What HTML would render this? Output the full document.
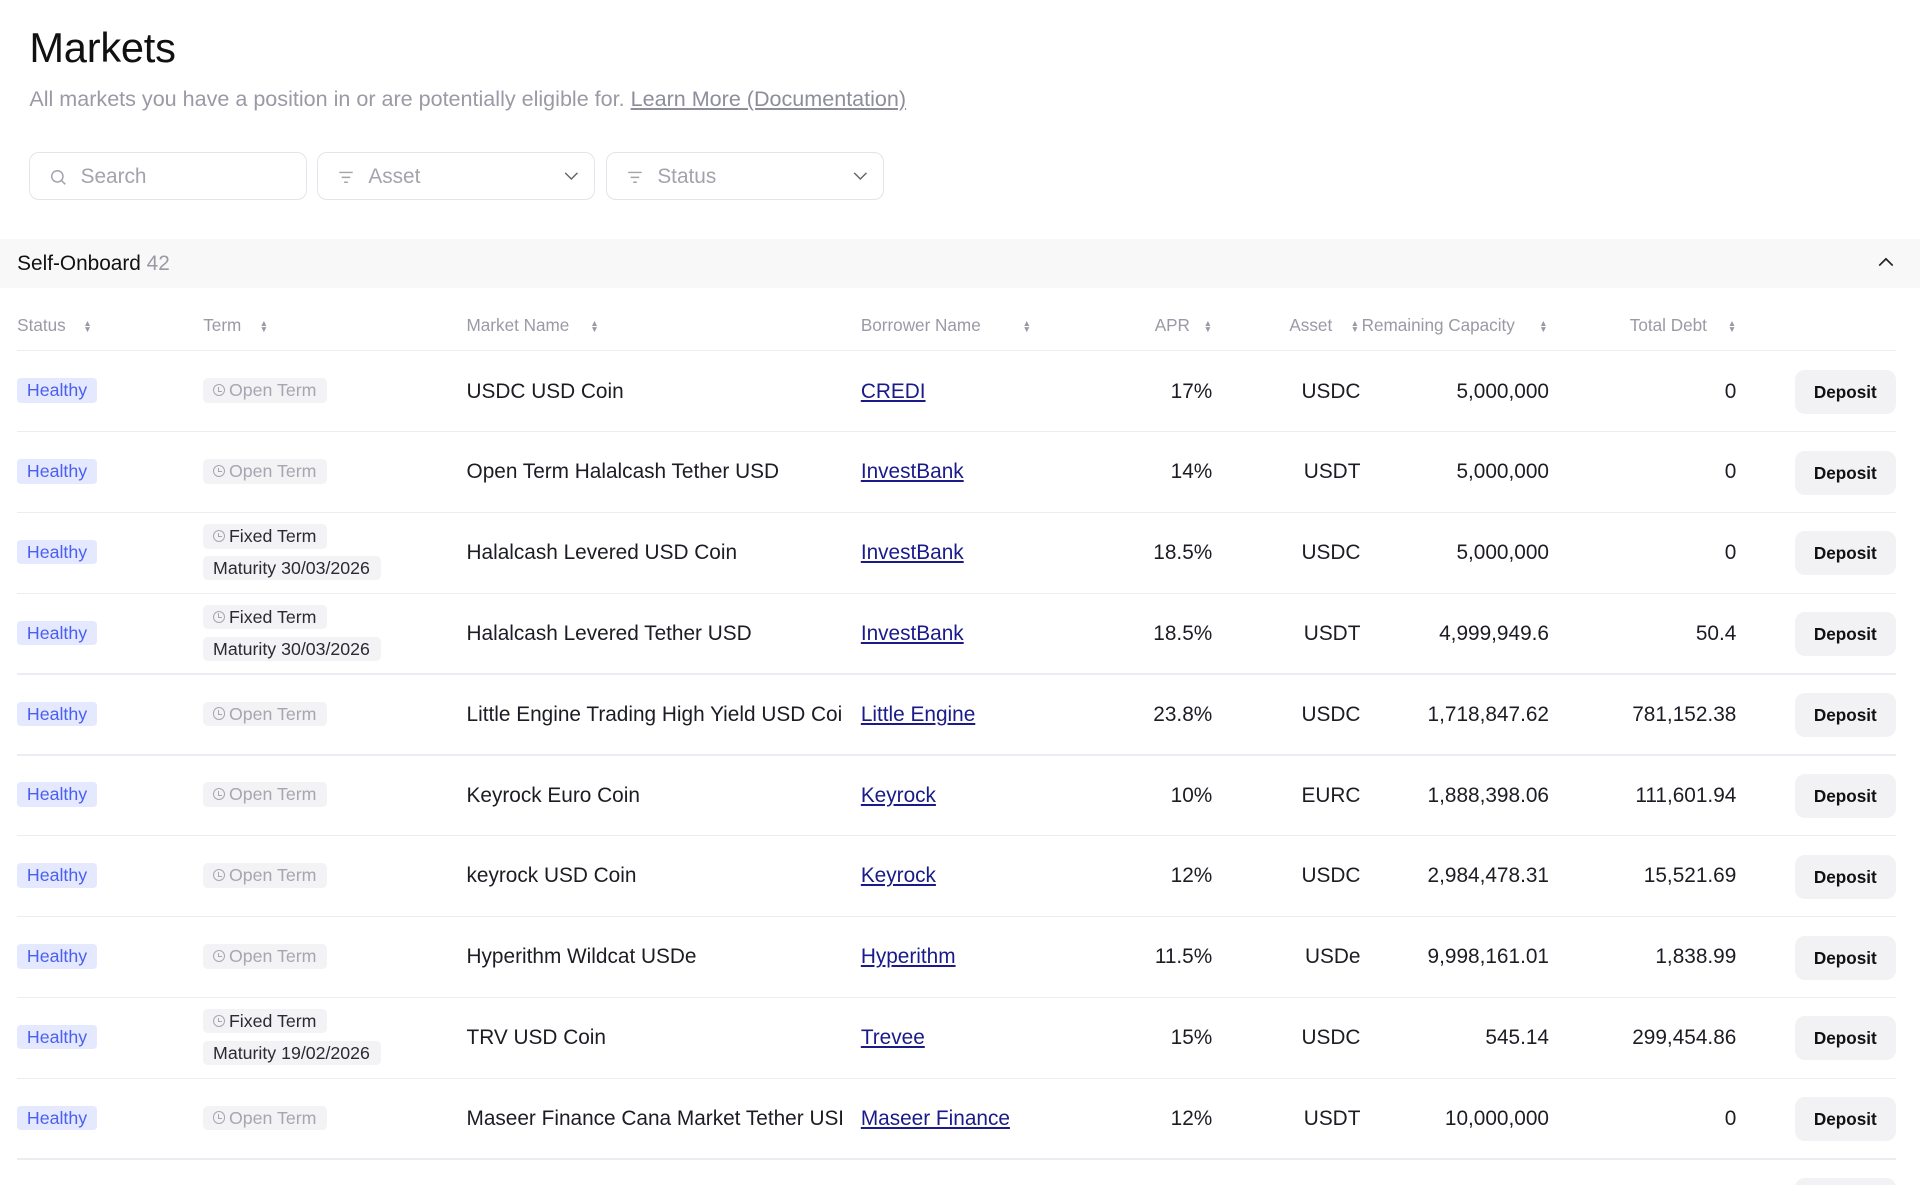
<!DOCTYPE html>
<html><head><meta charset="utf-8"><style>
html,body{margin:0;padding:0;background:#fff;overflow:hidden;width:1920px;height:1185px}
#w{zoom:1.22449;width:1568px;height:968px;position:relative;font-family:"Liberation Sans",sans-serif;color:#1c1c24}
.a{position:absolute;white-space:nowrap}
h1{position:absolute;left:24px;top:20px;margin:0;font-size:34px;font-weight:400;letter-spacing:-0.2px;color:#111}
.sub{left:24px;top:70px;font-size:17.6px;color:#9a9aa6}
.sub u{color:#8d8d9c}
.inp{top:124px;height:38px;width:225px;border:1px solid #e3e3ea;border-radius:8px}
.inp span{position:absolute;left:41px;top:10px;font-size:17px;color:#a3a3ad}
.band{left:0;top:195px;width:1568px;height:40px;background:#f8f8f8}
.hd{font-size:14px;color:#9a9aa6;top:257px}
.sort{font-size:7px;color:#9a9aa6;top:261px;line-height:5px}
.line{left:14px;width:1534px;height:1px;background:#ececf2}
.row{position:absolute;left:0;width:1568px;height:66px}
.row .a{font-size:17px}
.hb{left:14px;top:22px;height:20px;padding:0 8px;line-height:21px;background:#e5e9ff;color:#4a5ff0;font-size:14.5px!important;border-radius:3px}
.tb{left:166px;height:20px;padding:0 9px 0 8px;line-height:21px;background:#f3f3f5;color:#a6a6b0;font-size:14.5px!important;border-radius:4px}
.tb.d{color:#2a2a33}
.ck{display:inline-block;width:10px;height:10px;border:1.2px solid #a6a6b0;border-radius:50%;margin-right:3px;position:relative;box-sizing:border-box}
.ck:after{content:"";position:absolute;left:3.5px;top:1.5px;width:2px;height:3px;border-left:1.2px solid #a6a6b0;border-bottom:1.2px solid #a6a6b0}
.mn{left:381px;top:23px;width:307px;overflow:hidden}
.bn{left:703px;top:23px;color:#1a1a8a;text-decoration:underline}
.r{text-align:right;top:23px}
.btn{left:1466px;top:15px;width:82px;height:36px;background:#f2f2f5;border-radius:8px;font-size:14px!important;font-weight:bold;text-align:center;line-height:36px;color:#111}
</style></head><body><div id="w">
<h1>Markets</h1>
<div class="a sub">All markets you have a position in or are potentially eligible for. <u>Learn More (Documentation)</u></div>
<div class="a inp" style="left:24px"><svg class="a" style="left:16px;top:13px" width="14" height="14" viewBox="0 0 14 14"><circle cx="6" cy="6" r="4.6" fill="none" stroke="#a3a3ad" stroke-width="1.2"/><path d="M9.5 9.5L12.5 12.5" stroke="#a3a3ad" stroke-width="1.2"/></svg><span>Search</span></div>
<div class="a inp" style="left:259px"><svg class="a" style="left:16px;top:14px" width="14" height="12"><path d="M1 2h11M3 6h7M5 10h3" stroke="#a3a3ad" stroke-width="1.2"/></svg><span>Asset</span><svg class="a" style="right:12px;top:15px" width="12" height="8"><path d="M1 1.5l5 5 5-5" fill="none" stroke="#666" stroke-width="1.2"/></svg></div>
<div class="a inp" style="left:495px"><svg class="a" style="left:16px;top:14px" width="14" height="12"><path d="M1 2h11M3 6h7M5 10h3" stroke="#a3a3ad" stroke-width="1.2"/></svg><span>Status</span><svg class="a" style="right:12px;top:15px" width="12" height="8"><path d="M1 1.5l5 5 5-5" fill="none" stroke="#666" stroke-width="1.2"/></svg></div>
<div class="a band"><span class="a" style="left:14px;top:11px;font-size:17px;color:#111">Self-Onboard <span style="color:#9a9aa6">42</span></span><svg class="a" style="left:1534px;top:15px" width="13" height="8"><path d="M1 7l5.5-5.5L12 7" fill="none" stroke="#222" stroke-width="1.4"/></svg></div>

<div class="a hd" style="left:14px">Status</div><div class="a sort" style="left:68px">▲<br>▼</div>
<div class="a hd" style="left:166px">Term</div><div class="a sort" style="left:212px">▲<br>▼</div>
<div class="a hd" style="left:381px">Market Name</div><div class="a sort" style="left:482px">▲<br>▼</div>
<div class="a hd" style="left:703px">Borrower Name</div><div class="a sort" style="left:835px">▲<br>▼</div>
<div class="a hd" style="left:943px">APR</div><div class="a sort" style="left:983px">▲<br>▼</div>
<div class="a hd" style="left:1053px">Asset</div><div class="a sort" style="left:1103px">▲<br>▼</div>
<div class="a hd" style="left:1112px">Remaining Capacity</div><div class="a sort" style="left:1257px">▲<br>▼</div>
<div class="a hd" style="left:1331px">Total Debt</div><div class="a sort" style="left:1411px">▲<br>▼</div>
<div class="a line" style="top:286px"></div>

<div id="rows"></div>
<script>
var d=[
["o","USDC USD Coin","CREDI","17%","USDC","5,000,000","0"],
["o","Open Term Halalcash Tether USD","InvestBank","14%","USDT","5,000,000","0"],
["30/03/2026","Halalcash Levered USD Coin","InvestBank","18.5%","USDC","5,000,000","0"],
["30/03/2026","Halalcash Levered Tether USD","InvestBank","18.5%","USDT","4,999,949.6","50.4"],
["o","Little Engine Trading High Yield USD Coin","Little Engine","23.8%","USDC","1,718,847.62","781,152.38"],
["o","Keyrock Euro Coin","Keyrock","10%","EURC","1,888,398.06","111,601.94"],
["o","keyrock USD Coin","Keyrock","12%","USDC","2,984,478.31","15,521.69"],
["o","Hyperithm Wildcat USDe","Hyperithm","11.5%","USDe","9,998,161.01","1,838.99"],
["19/02/2026","TRV USD Coin","Trevee","15%","USDC","545.14","299,454.86"],
["o","Maseer Finance Cana Market Tether USD","Maseer Finance","12%","USDT","10,000,000","0"],
["o","","","","","",""]];
var h="";
d.forEach(function(r,i){
var t=287+i*66;
h+='<div class="row" style="top:'+t+'px">';
if(i<10){
h+='<div class="a hb">Healthy</div>';
if(r[0]=="o")h+='<div class="a tb" style="top:22px"><span class="ck"></span>Open Term</div>';
else h+='<div class="a tb d" style="top:9px"><span class="ck"></span>Fixed Term</div><div class="a tb d" style="top:35px">Maturity '+r[0]+'</div>';
h+='<div class="a mn">'+r[1]+'</div><div class="a bn">'+r[2]+'</div>';
h+='<div class="a r" style="right:578px">'+r[3]+'</div><div class="a r" style="right:457px">'+r[4]+'</div><div class="a r" style="right:303px">'+r[5]+'</div><div class="a r" style="right:150px">'+r[6]+'</div>';
}
h+='<div class="a btn">'+(i<10?'Deposit':'')+'</div></div>';
if(i<10)h+='<div class="a line" style="top:'+(t+65)+'px"></div>';
});
document.getElementById("rows").innerHTML=h;
</script>
</div></body></html>
